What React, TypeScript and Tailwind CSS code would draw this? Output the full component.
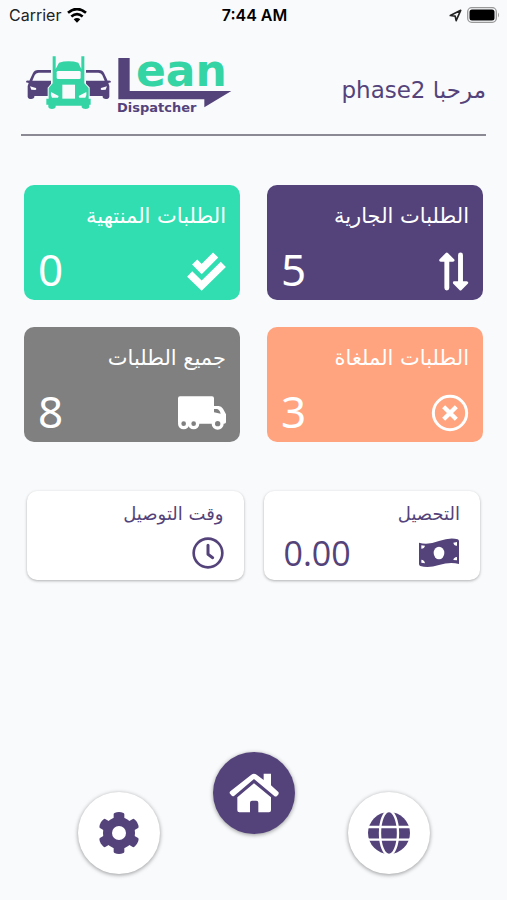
import React from "react";

function StatusBar() {
  return (
    <div dir="ltr" className="grid h-[30px] grid-cols-3 items-center pr-[7px] pl-[9px] font-['Inter',sans-serif] text-[16px] leading-[20px] text-[#222]">
      <div className="flex items-center gap-[6px]">
        <span>Carrier</span>
        <svg className="h-[15px] w-[20px]" viewBox="205 20 60 44" aria-hidden="true">
          <g fill="none" stroke="#000" strokeWidth="8">
            <path d="M208 34 Q235 11 262 34" />
            <path d="M218 45 Q235 31 252 45" />
          </g>
          <path d="M225 53 Q235 46 245 53 L235 64Z" />
        </svg>
      </div>
      <span className="text-center font-semibold text-black">7:44 AM</span>
      <div className="flex items-center justify-end gap-[5px]">
        <svg className="h-[13px] w-[13px]" viewBox="584 23 40 40" aria-hidden="true">
          <path d="M588 43 L620 27 L606 59 L603 45Z" fill="none" stroke="#222" strokeWidth="5" strokeLinejoin="round" />
        </svg>
        <svg className="h-[16px] w-[33px]" viewBox="0 0 33 16" aria-hidden="true">
          <rect x="0.7" y="0.7" width="28.6" height="14.6" rx="4" fill="none" stroke="#999" strokeWidth="1.3" />
          <rect x="2.5" y="2.5" width="25" height="11" rx="2.5" />
          <path d="M31 5.5 Q33 8 31 10.5Z" fill="#999" />
        </svg>
      </div>
    </div>
  );
}

function Car() {
  return (
    <>
      <path
        fill="#54437a"
        d="M88 242 L99 219 Q103 210 114 210 H153 V218 H116 Q107 218 104 226 L97 242 H153 V288 H103 V292 Q101 297 94 297 Q84 297 83 290 V258 L86 249 L78 247 Q77 240 88 242Z"
      />
      <path fill="#f9fafc" d="M90 259 L108 264 Q111 269 106 270 L94 269Z" />
    </>
  );
}

function Logo() {
  return (
    <svg direction="ltr" className="h-[78px] w-[206px] shrink-0" viewBox="26 42 206 78" role="img" aria-label="Lean Dispatcher">
      <g transform="scale(0.33333)">
        <Car />
        <g transform="translate(411 0) scale(-1 1)">
          <Car />
        </g>
        <path
          fill="#34d4a4"
          stroke="#f9fafc"
          strokeWidth="6"
          paintOrder="stroke"
          d="M158 169 H167 V207 L177 188 Q190 184 206 184 Q222 184 235 188 L244 207 V169 H253 V250 L266 264 V296 H272 V314 H268 V322 Q266 327 257 327 Q247 327 245 322 V317 H167 V322 Q165 327 156 327 Q147 327 145 322 V314 H139 V296 H146 V264 L158 250Z"
        />
        <g fill="#f9fafc">
          <rect x="170" y="213" width="72" height="24" rx="4" />
          <path d="M187 254 H225 V296 H187Z" />
          <path d="M153 276 L176 288 L174 293 H156 Q151 288 153 276Z M259 276 L236 288 L238 293 H256 Q261 288 259 276Z" />
        </g>
        <path d="M355 174 H389 V273 H694 L613 322 V298 H355Z" fill="#54437a" />
      </g>
      <text x="136" y="86" fill="#34d4a4" className="font-['DejaVu_Sans',sans-serif] text-[44px] font-bold">ean</text>
      <text x="117" y="112" fill="#54437a" className="font-['DejaVu_Sans',sans-serif] text-[13px] font-bold">Dispatcher</text>
    </svg>
  );
}

function ArrowsIcon() {
  return (
    <svg className="h-[39px] w-[30px]" viewBox="542 232 92 117" fill="currentColor" stroke="currentColor" strokeLinejoin="round" strokeLinecap="round" aria-hidden="true">
      <path d="M566 250 V341 M608 240 V330" fill="none" strokeWidth="15" />
      <path d="M547 256 L566 237 L585 256Z M589 325 L608 344 L627 325Z" strokeWidth="9" />
    </svg>
  );
}

function DoubleCheckIcon() {
  return (
    <svg className="h-[39px] w-[39px]" viewBox="536 230 117 117" fill="none" stroke="currentColor" strokeWidth="22" strokeLinejoin="miter" aria-hidden="true">
      <path d="M559 260 L580 281 L622 239" />
      <path d="M544 296 L580 331 L645 267" />
    </svg>
  );
}

function CloseCircleIcon() {
  return (
    <svg className="h-[38px] w-[38px]" viewBox="528 228 114 114" fill="none" stroke="currentColor" aria-hidden="true">
      <circle cx="585" cy="285" r="50" strokeWidth="9" />
      <path d="M566 266 L604 304 M604 266 L566 304" strokeWidth="13" />
    </svg>
  );
}

function TruckIcon() {
  return (
    <svg className="h-[34px] w-[48px]" viewBox="508 233 144 102" fill="currentColor" aria-hidden="true">
      <path
        fillRule="evenodd"
        d="M514 234 H610 Q616 234 616 240 V263 H630 Q638 263 643 271 L652 288 V312 Q652 316 646 316 H514 Q508 316 508 310 V240 Q508 234 514 234Z M616 272 V282 L636 286 Q632 272 624 272Z"
      />
      <circle cx="525" cy="316" r="17" />
      <circle cx="555" cy="316" r="17" />
      <circle cx="627" cy="316" r="18" />
      <g fill="#808080">
        <circle cx="525" cy="316" r="7" />
        <circle cx="555" cy="316" r="7" />
        <circle cx="627" cy="316" r="8" />
      </g>
    </svg>
  );
}

function MoneyIcon() {
  return (
    <svg className="h-[30px] w-[42px]" viewBox="488 176 126 90" aria-hidden="true">
      <path fill="currentColor" d="M491 190 Q517 198 551 185 Q585 173 607 180 Q611 181 611 186 V254 Q585 246 551 257 Q518 268 495 260 Q491 259 491 254Z" />
      <g fill="#fff">
        <ellipse cx="551" cy="221" rx="16" ry="19" />
        <path d="M498 198 L509 199 Q507 208 498 208Z M605 188 V199 Q596 200 594 190Z M498 241 Q507 241 509 252 L498 250Z M605 243 L594 242 Q595 234 605 233Z" />
      </g>
    </svg>
  );
}

function ClockIcon() {
  return (
    <svg className="h-[32px] w-[32px]" viewBox="544 172 96 96" fill="none" stroke="currentColor" strokeLinecap="round" strokeLinejoin="round" aria-hidden="true">
      <circle cx="592" cy="220" r="43" strokeWidth="8" />
      <path d="M592 197 V224 L606 234" strokeWidth="9" />
    </svg>
  );
}

function HomeIcon() {
  return (
    <svg className="h-[40px] w-[50px]" viewBox="507 101 150 120" fill="currentColor" aria-hidden="true">
      <path d="M611 103 H633 V138 L655 158 Q659 164 650 171 Q646 173 642 169 L582 119 L523 169 Q518 173 514 168 L509 162 Q508 158 512 155 L574 106 Q582 100 590 106 L611 122Z" />
      <path d="M582 132 L633 174 V213 Q633 219 627 219 H595 V190 Q595 184 589 184 H576 Q570 184 570 190 V219 H538 Q532 219 532 213 V174Z" />
    </svg>
  );
}

function GearIcon() {
  const tooth = "M-16 -57 Q-15 -62 0 -63 Q15 -62 16 -57 V57 Q15 62 0 63 Q-15 62 -16 57Z";
  return (
    <svg className="size-[42px]" viewBox="-63 -63 126 126" fill="currentColor" aria-hidden="true">
      <circle r="48" />
      <path d={tooth} />
      <path d={tooth} transform="rotate(60)" />
      <path d={tooth} transform="rotate(120)" />
      <circle r="21" fill="#fff" />
    </svg>
  );
}

function GlobeIcon() {
  return (
    <svg className="size-[42px]" viewBox="-63 -63 126 126" aria-hidden="true">
      <circle r="63" fill="currentColor" />
      <g fill="none" stroke="#fff" strokeWidth="7">
        <ellipse rx="27" ry="66" />
        <path d="M-63 -18 H63 M-63 20 H63" />
      </g>
    </svg>
  );
}

type Order = { label: string; value: string; color: string; icon: React.ReactNode };

const orders: Order[] = [
  { label: "الطلبات الجارية", value: "5", color: "bg-[#54437a]", icon: <ArrowsIcon /> },
  { label: "الطلبات المنتهية", value: "0", color: "bg-[#30deb1]", icon: <DoubleCheckIcon /> },
  { label: "الطلبات الملغاة", value: "3", color: "bg-[#ffa47f]", icon: <CloseCircleIcon /> },
  { label: "جميع الطلبات", value: "8", color: "bg-[#808080]", icon: <TruckIcon /> },
];

function OrderCard({ label, value, color, icon }: Order) {
  return (
    <button type="button" className={`flex flex-col justify-between rounded-[10px] px-[14px] pt-[16px] pb-[7px] text-start text-white ${color}`}>
      <span className="text-[21px] leading-[30px]">{label}</span>
      <span className="flex h-[44px] w-full items-center justify-between">
        {icon}
        <span className="pb-[4px] font-['Noto_Sans',sans-serif] text-[44px] leading-[44px]">{value}</span>
      </span>
    </button>
  );
}

function InfoCard({ label, value, icon }: { label: string; value?: string; icon: React.ReactNode }) {
  return (
    <section className="rounded-[10px] bg-white px-[20px] pt-[8px] pb-[3px] shadow-[0_1px_3px_rgba(0,0,0,0.3)]">
      <h2 className="text-[18px] leading-[30px]">{label}</h2>
      <div className="flex h-[48px] items-center justify-between">
        {icon}
        {value && <span className="font-['Open_Sans',sans-serif] text-[34px] leading-[44px] font-medium">{value}</span>}
      </div>
    </section>
  );
}

export default function App() {
  return (
    <div dir="rtl" className="flex min-h-screen flex-col bg-[#f9fafc] font-['DejaVu_Sans',sans-serif] text-[#54437a]">
      <StatusBar />
      <header className="mx-[21px] flex h-[106px] items-start justify-between border-b-2 border-[#8b8994] pt-[12px]">
        <h1 className="pt-[32px] text-[23px] leading-[32px]">مرحبا phase2</h1>
        <div className="pl-[5px]"><Logo /></div>
      </header>
      <main>
        <div className="mx-[24px] mt-[49px] grid auto-rows-[115px] grid-cols-2 gap-[27px]">
          {orders.map((order) => (
            <OrderCard key={order.label} {...order} />
          ))}
        </div>
        <div className="mx-[27px] mt-[49px] grid grid-cols-2 gap-[20px]">
          <InfoCard label="التحصيل" value="0.00" icon={<MoneyIcon />} />
          <InfoCard label="وقت التوصيل" icon={<ClockIcon />} />
        </div>
      </main>
      <nav className="mt-auto flex items-start justify-center gap-[53px] pb-[26px]">
        <button type="button" aria-label="Language" className="mt-[40px] flex size-[82px] items-center justify-center rounded-full bg-white shadow-[0_1px_4px_rgba(0,0,0,0.4)]">
          <GlobeIcon />
        </button>
        <button type="button" aria-label="Home" className="flex size-[82px] items-center justify-center rounded-full bg-[#54437a] text-white shadow-[0_1px_4px_rgba(0,0,0,0.4)]">
          <HomeIcon />
        </button>
        <button type="button" aria-label="Settings" className="mt-[40px] flex size-[82px] items-center justify-center rounded-full bg-white shadow-[0_1px_4px_rgba(0,0,0,0.4)]">
          <GearIcon />
        </button>
      </nav>
    </div>
  );
}
